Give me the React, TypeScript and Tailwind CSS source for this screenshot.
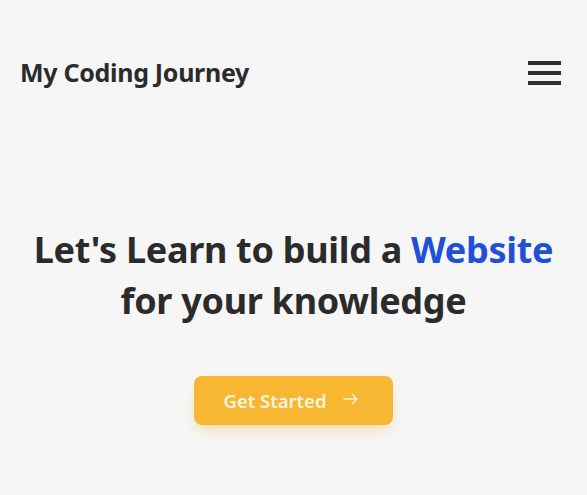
import React from 'react';

export default function App() {
  return (
    <div
      className="min-h-[495px] bg-[#f6f6f6] text-[#2b2b2b]"
      style={{ fontFamily: '"Noto Sans", "Open Sans", sans-serif' }}
    >
      {/* Header */}
      <header className="flex h-[146px] items-center justify-between pl-5 pr-[26px]">
        <h1 className="text-[25px] font-bold tracking-[-0.3px]">My Coding Journey</h1>
        <button className="flex h-[34px] w-[33px] flex-col justify-center gap-[6.5px]" aria-label="menu">
          <span className="block h-[3.5px] w-[33px] bg-[#2f2f2f]" />
          <span className="block h-[3.5px] w-[33px] bg-[#2f2f2f]" />
          <span className="block h-[3.5px] w-[33px] bg-[#2f2f2f]" />
        </button>
      </header>

      {/* Hero */}
      <section className="flex flex-col items-center pt-[78px] text-center">
        <h2 className="text-[36px] font-bold leading-[51px] tracking-[-0.3px]">
          Let's Learn to build a <span className="text-[#2150d4]">Website</span>
          <br />
          for your knowledge
        </h2>
        <button className="mt-[50px] flex h-[49px] w-[199px] items-center justify-center gap-4 rounded-lg bg-[#f7b733] pr-[5px] text-[18.5px] font-semibold text-[#fef4dc] shadow-[0_8px_14px_-4px_rgba(247,183,51,0.45)]">
          <span>Get Started</span>
          <svg width="16" height="12" viewBox="0 0 16 12" fill="none" className="mb-[4px]">
            <path d="M1 6h13M9.5 1.5L14 6l-4.5 4.5" stroke="#fef4dc" strokeWidth="1.3" strokeLinecap="round" strokeLinejoin="round" />
          </svg>
        </button>
      </section>
    </div>
  );
}
